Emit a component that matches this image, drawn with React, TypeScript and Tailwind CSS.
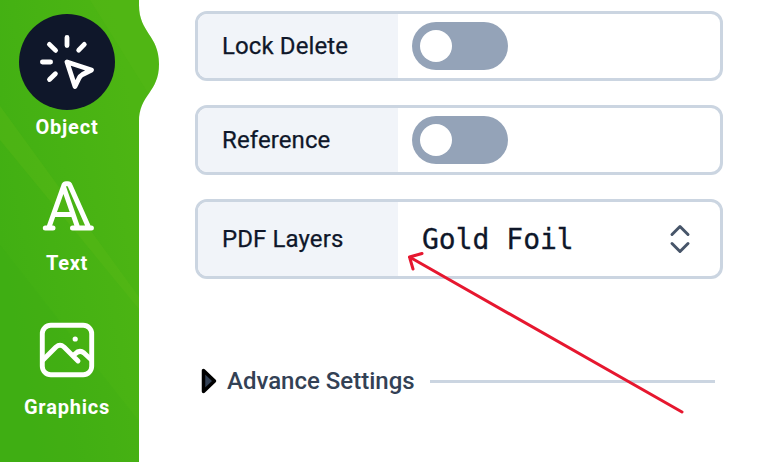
import type { ReactNode } from "react";

function Switch() {
  return (
    <button aria-label="Toggle" className="ml-3.5 flex h-12 w-24 items-center rounded-full bg-[#94a3b8] p-2">
      <span className="size-8 rounded-full bg-white" />
    </button>
  );
}

function SettingRow({ label, height, children }: { label: string; height: string; children: ReactNode }) {
  return (
    <div className={`flex w-[528px] overflow-hidden rounded-xl border-3 border-[#cbd5e1] bg-white ${height}`}>
      <div className="flex w-[200px] items-center bg-[#f1f4f9] pl-6 text-2xl tracking-[.1px] text-[#0f172a] [-webkit-text-stroke:.25px_#0f172a]">
        <span className="whitespace-nowrap">{label}</span>
      </div>
      <div className="flex flex-1 items-center">{children}</div>
    </div>
  );
}

function SidebarBackdrop() {
  return (
    <svg className="absolute top-0 left-0" width="160" height="462" viewBox="0 0 160 462">
      <defs>
        <linearGradient id="green" gradientUnits="userSpaceOnUse" x1="0" y1="240" x2="150" y2="215">
          <stop offset="0" stopColor="#41af13" />
          <stop offset="1" stopColor="#4db513" />
        </linearGradient>
        <clipPath id="shape">
          <path d="M0 0H139V5C139 33 159 35 159 64S139 94 139 122V462H0Z" />
        </clipPath>
      </defs>
      <g clipPath="url(#shape)">
        <path d="M0 0H160V462H0Z" fill="url(#green)" />
        <path d="M90 0L160 112V0Z" fill="#59b917" opacity=".3" />
        <path d="M0 106L139 297V309L0 140Z" fill="#59b917" opacity=".4" />
        <path d="M0 245L139 421V462H0Z" fill="#38aa13" opacity=".15" />
      </g>
    </svg>
  );
}

function CursorIcon() {
  return (
    <svg width="96" height="96" viewBox="19 14 96 96" fill="none" stroke="white" strokeWidth="4.8" strokeLinecap="round" strokeLinejoin="round">
      <path d="M67 37.4V45.6M49.4 44.4L55.6 50.4M84.3 44.4L78.7 50.2M42.4 62H50.6M49.5 79.5L55.4 73.7M67 62L91.5 70L82.5 74.5Q80 76 79 78.3L75 86.5Z" />
    </svg>
  );
}

function LetterIcon() {
  return (
    <svg width="56" height="56" viewBox="39 179 56 56" fill="none" stroke="white" strokeWidth="5" strokeLinecap="round" strokeLinejoin="round">
      <path d="M45.3 228H53M72.5 228H91.4M49 227L64 185Q64.5 183.7 66 183.7H68Q69.3 183.7 69.8 185L88.5 227M63.6 187L77.5 227M54.5 214.5H73" />
    </svg>
  );
}

function ImageIcon() {
  return (
    <svg width="56" height="56" viewBox="39 322 56 56" fill="none" stroke="white" strokeWidth="4.9" strokeLinecap="round" strokeLinejoin="round">
      <rect x="42.3" y="325.3" width="49.4" height="49.4" rx="8.5" />
      <path d="M43 360L56 347Q60 343.5 64 347L78 361M73.5 355.5L75 354Q79.5 349.3 84 353L91 359.5" />
      <circle cx="75.2" cy="339" r="2.6" fill="white" stroke="none" />
    </svg>
  );
}

export default function App() {
  return (
    <div className="relative flex h-[462px] w-[774px] overflow-hidden bg-white font-['Roboto',sans-serif]">
      <aside className="relative w-[139px] shrink-0">
        <SidebarBackdrop />
        <nav className="relative flex w-[134px] flex-col items-center pt-3.5 text-xl font-bold text-white">
          <div className="flex flex-col items-center">
            <span className="size-24 rounded-full bg-[#0f172a]"><CursorIcon /></span>
            <span className="mt-[3px] leading-7 tracking-[.8px]">Object</span>
          </div>
          <div className="mt-[38px] flex flex-col items-center">
            <LetterIcon />
            <span className="mt-3.5 leading-7 tracking-[.7px]">Text</span>
          </div>
          <div className="mt-[45px] flex flex-col items-center">
            <ImageIcon />
            <span className="mt-[15px] leading-7 tracking-[.8px]">Graphics</span>
          </div>
        </nav>
      </aside>
      <main className="ml-14 flex flex-col gap-6 pt-[11px]">
        <SettingRow label="Lock Delete" height="h-[70px]"><Switch /></SettingRow>
        <SettingRow label="Reference" height="h-[70px]"><Switch /></SettingRow>
        <SettingRow label="PDF Layers" height="h-20">
          <div className="flex flex-1 items-center justify-between pr-[27px] pl-6 text-[#0f172a]">
            <span className="pt-0.5 font-['DejaVu_Sans_Mono',monospace] text-[28px] leading-8 [-webkit-text-stroke:.3px_#0f172a]">Gold Foil</span>
            <svg width="26" height="32" viewBox="0 0 26 32" fill="none" stroke="#475569" strokeWidth="3" strokeLinecap="round" strokeLinejoin="round">
              <path d="M5 11.5L13 3.5L21 11.5M5 20.5L13 28.5L21 20.5" />
            </svg>
          </div>
        </SettingRow>
        <div className="mt-[62px] flex w-[520px] items-center">
          <svg width="24" height="32" viewBox="0 0 24 32" fill="#334155" stroke="black" strokeWidth="3.5" strokeLinejoin="round">
            <path d="M8.5 5.5V26.5L19.5 16Z" />
          </svg>
          <span className="ml-2 text-2xl font-medium whitespace-nowrap text-[#334155]">Advance Settings</span>
          <span className="ml-[15px] h-[3px] flex-1 bg-[#cbd5e1]" />
        </div>
      </main>
      <svg className="pointer-events-none absolute inset-0" width="774" height="462" fill="none" stroke="#e6172f" strokeWidth="3" strokeLinecap="round" strokeLinejoin="round">
        <path d="M682 412L409.5 257M422 253.5L409.5 257L413 269" />
      </svg>
    </div>
  );
}
